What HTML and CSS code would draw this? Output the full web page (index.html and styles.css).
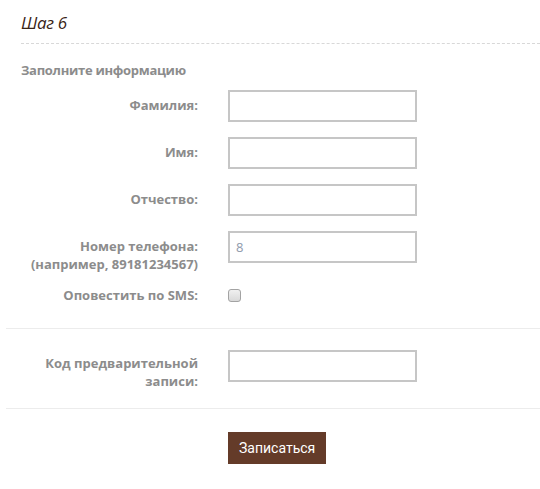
FILE: index.html
```html
<!DOCTYPE html>
<html lang="ru">
<head>
  <meta charset="UTF-8">
  <meta name="viewport" content="width=device-width, initial-scale=1.0">
  <title>Шаг 6</title>
  <link rel="stylesheet" href="styles.css">
</head>
<body>
  <div class="step">
    <h2 class="step-title">Шаг 6</h2>

    <div class="section-title">Заполните информацию</div>

    <form class="booking-form">
      <div class="form-row">
        <label for="lastName">Фамилия:</label>
        <input type="text" id="lastName">
      </div>
      <div class="form-row">
        <label for="firstName">Имя:</label>
        <input type="text" id="firstName">
      </div>
      <div class="form-row">
        <label for="middleName">Отчество:</label>
        <input type="text" id="middleName">
      </div>
      <div class="form-row">
        <label for="phone">Номер телефона:<br>(например, 89181234567)</label>
        <input type="text" id="phone" value="8" class="phone">
      </div>
      <div class="form-row check-row">
        <label for="sms">Оповестить по SMS:</label>
        <input type="checkbox" id="sms">
      </div>

      <hr class="divider">

      <div class="form-row code-row">
        <label for="code">Код предварительной записи:</label>
        <input type="text" id="code">
      </div>

      <hr class="divider">

      <div class="form-actions">
        <button type="button">Записаться</button>
      </div>
    </form>
  </div>
</body>
</html>
```

FILE: styles.css
```css
body {
  margin: 0;
  font-family: 'Open Sans', 'Liberation Sans', sans-serif;
  background: #fff;
  color: #888;
}
.step {
  width: 540px;
}
.step-title {
  margin: 0 0 0 21px;
  padding: 13px 0 11px;
  font-family: 'Open Sans', sans-serif;
  font-style: italic;
  font-weight: 400;
  font-size: 17px;
  line-height: 19px;
  letter-spacing: -0.3px;
  color: #3a2416;
  border-bottom: 1px dashed #d8d8d8;
}
.section-title {
  margin: 18px 0 0 21px;
  font-size: 13px;
  font-weight: bold;
  line-height: 16px;
  letter-spacing: -0.3px;
  color: #8c8c8c;
}
.booking-form {
  margin-top: 12px;
  padding-left: 6px;
}
.form-row {
  display: flex;
  align-items: flex-start;
  height: 32px;
  margin-bottom: 15px;
}
.form-row label {
  flex: none;
  width: 192px;
  padding-top: 6px;
  margin-right: 30px;
  text-align: right;
  font-size: 13px;
  font-weight: bold;
  line-height: 18px;
  color: #8c8c8c;
}
.form-row input[type="text"] {
  box-sizing: border-box;
  width: 189px;
  height: 32px;
  margin: 0;
  padding: 0 6px;
  border: 2px solid #c6c6c6;
  background: #fff;
  font-family: 'Open Sans', sans-serif;
  font-size: 13px;
  color: #8f9aab;
  outline: none;
}
.check-row {
  margin-bottom: 0;
}
.check-row label {
  padding-top: 8px;
}
.check-row input[type="checkbox"] {
  appearance: none;
  box-sizing: border-box;
  width: 13px;
  height: 13px;
  margin: 11px 0 0;
  border: 1px solid #a3a3a3;
  border-radius: 3px;
  background: linear-gradient(#f0f0f0, #d9d9d9);
}
.divider {
  margin: 18px 0 0;
  border: none;
  border-top: 1px solid #ececec;
}
.code-row {
  margin: 21px 0 26px;
}
.code-row label {
  padding-top: 4px;
}
.form-actions {
  padding: 23px 0 0 222px;
}
.form-actions button {
  height: 32px;
  padding: 0 11px;
  border: none;
  background: #643b29;
  color: #fff;
  font-family: Roboto, sans-serif;
  font-size: 14px;
  cursor: pointer;
}
```
